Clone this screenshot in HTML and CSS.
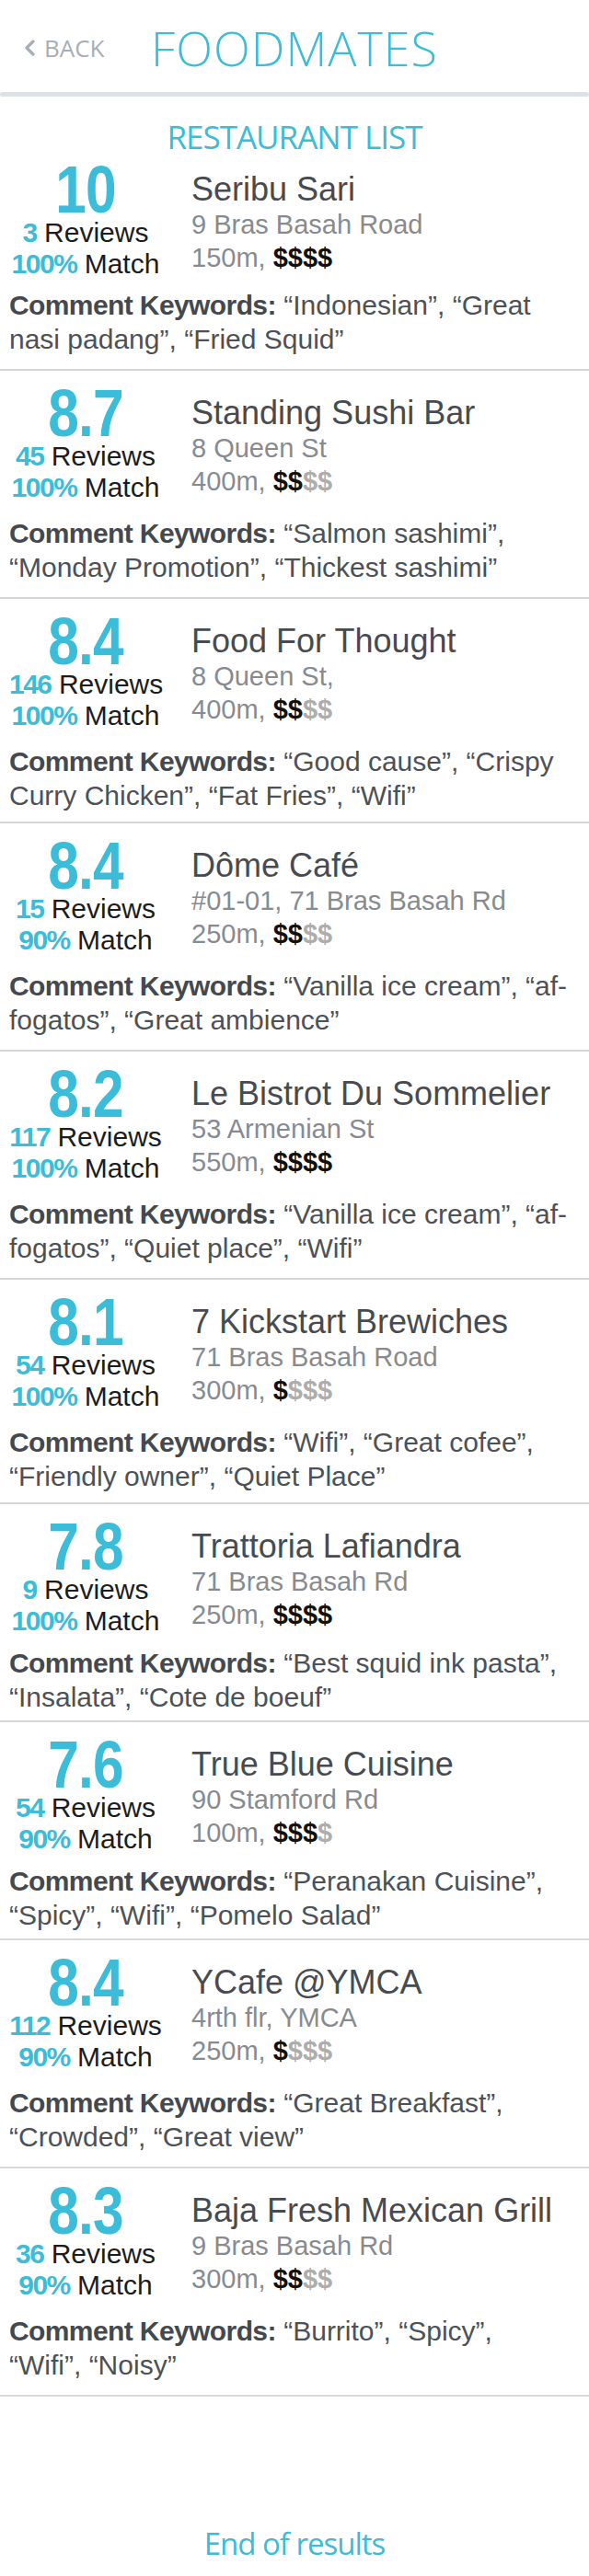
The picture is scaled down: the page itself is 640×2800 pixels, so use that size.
FILE: index.html
```html
<!DOCTYPE html>
<html lang="en">
<head>
<meta charset="utf-8">
<title>Foodmates – Restaurant List</title>
<link rel="stylesheet" href="styles.css">
</head>
<body>
<div class="screen">
  <header class="topbar">
    <a class="back" href="#">
      <svg class="back-icon" viewBox="0 0 14 18" width="14" height="18" aria-hidden="true"><polyline points="11,2 4,9 11,16" fill="none" stroke="currentColor" stroke-width="3.2" stroke-linecap="round" stroke-linejoin="round"/></svg>
      <span>BACK</span>
    </a>
    <h1 class="brand">FOODMATES</h1>
  </header>
  <div class="topbar-shadow"></div>

  <h2 class="list-title">RESTAURANT LIST</h2>

  <ul class="list">
    <li class="item">
      <div class="item-main">
        <div class="score">
          <div class="score-value">10</div>
          <div class="score-meta"><b>3</b> Reviews</div>
          <div class="score-meta"><b>100%</b> Match</div>
        </div>
        <div class="info">
          <div class="name">Seribu Sari</div>
          <div class="addr">9 Bras Basah Road</div>
          <div class="dist">150m, <span class="price">$$$$</span></div>
        </div>
      </div>
      <p class="keywords"><b>Comment Keywords:</b> “Indonesian”, “Great<br>nasi padang”, “Fried Squid”</p>
    </li>

    <li class="item">
      <div class="item-main">
        <div class="score">
          <div class="score-value">8.7</div>
          <div class="score-meta"><b>45</b> Reviews</div>
          <div class="score-meta"><b>100%</b> Match</div>
        </div>
        <div class="info">
          <div class="name">Standing Sushi Bar</div>
          <div class="addr">8 Queen St</div>
          <div class="dist">400m, <span class="price">$$<span class="off">$$</span></span></div>
        </div>
      </div>
      <p class="keywords"><b>Comment Keywords:</b> “Salmon sashimi”,<br>“Monday Promotion”, “Thickest sashimi”</p>
    </li>

    <li class="item item--snug">
      <div class="item-main">
        <div class="score">
          <div class="score-value">8.4</div>
          <div class="score-meta"><b>146</b> Reviews</div>
          <div class="score-meta"><b>100%</b> Match</div>
        </div>
        <div class="info">
          <div class="name">Food For Thought</div>
          <div class="addr">8 Queen St,</div>
          <div class="dist">400m, <span class="price">$$<span class="off">$$</span></span></div>
        </div>
      </div>
      <p class="keywords"><b>Comment Keywords:</b> “Good cause”, “Crispy<br>Curry Chicken”, “Fat Fries”, “Wifi”</p>
    </li>

    <li class="item">
      <div class="item-main">
        <div class="score">
          <div class="score-value">8.4</div>
          <div class="score-meta"><b>15</b> Reviews</div>
          <div class="score-meta"><b>90%</b> Match</div>
        </div>
        <div class="info">
          <div class="name">Dôme Café</div>
          <div class="addr">#01-01, 71 Bras Basah Rd</div>
          <div class="dist">250m, <span class="price">$$<span class="off">$$</span></span></div>
        </div>
      </div>
      <p class="keywords"><b>Comment Keywords:</b> “Vanilla ice cream”, “af-<br>fogatos”, “Great ambience”</p>
    </li>

    <li class="item">
      <div class="item-main">
        <div class="score">
          <div class="score-value">8.2</div>
          <div class="score-meta"><b>117</b> Reviews</div>
          <div class="score-meta"><b>100%</b> Match</div>
        </div>
        <div class="info">
          <div class="name">Le Bistrot Du Sommelier</div>
          <div class="addr">53 Armenian St</div>
          <div class="dist">550m, <span class="price">$$$$</span></div>
        </div>
      </div>
      <p class="keywords"><b>Comment Keywords:</b> “Vanilla ice cream”, “af-<br>fogatos”, “Quiet place”, “Wifi”</p>
    </li>

    <li class="item item--snug">
      <div class="item-main">
        <div class="score">
          <div class="score-value">8.1</div>
          <div class="score-meta"><b>54</b> Reviews</div>
          <div class="score-meta"><b>100%</b> Match</div>
        </div>
        <div class="info">
          <div class="name">7 Kickstart Brewiches</div>
          <div class="addr">71 Bras Basah Road</div>
          <div class="dist">300m, <span class="price">$<span class="off">$$$</span></span></div>
        </div>
      </div>
      <p class="keywords"><b>Comment Keywords:</b> “Wifi”, “Great cofee”,<br>“Friendly owner”, “Quiet Place”</p>
    </li>

    <li class="item item--tight">
      <div class="item-main">
        <div class="score">
          <div class="score-value">7.8</div>
          <div class="score-meta"><b>9</b> Reviews</div>
          <div class="score-meta"><b>100%</b> Match</div>
        </div>
        <div class="info">
          <div class="name">Trattoria Lafiandra</div>
          <div class="addr">71 Bras Basah Rd</div>
          <div class="dist">250m, <span class="price">$$$$</span></div>
        </div>
      </div>
      <p class="keywords"><b>Comment Keywords:</b> “Best squid ink pasta”,<br>“Insalata”, “Cote de boeuf”</p>
    </li>

    <li class="item item--tight">
      <div class="item-main">
        <div class="score">
          <div class="score-value">7.6</div>
          <div class="score-meta"><b>54</b> Reviews</div>
          <div class="score-meta"><b>90%</b> Match</div>
        </div>
        <div class="info">
          <div class="name">True Blue Cuisine</div>
          <div class="addr">90 Stamford Rd</div>
          <div class="dist">100m, <span class="price">$$$<span class="off">$</span></span></div>
        </div>
      </div>
      <p class="keywords"><b>Comment Keywords:</b> “Peranakan Cuisine”,<br>“Spicy”, “Wifi”, “Pomelo Salad”</p>
    </li>

    <li class="item">
      <div class="item-main">
        <div class="score">
          <div class="score-value">8.4</div>
          <div class="score-meta"><b>112</b> Reviews</div>
          <div class="score-meta"><b>90%</b> Match</div>
        </div>
        <div class="info">
          <div class="name">YCafe @YMCA</div>
          <div class="addr">4rth flr, YMCA</div>
          <div class="dist">250m, <span class="price">$<span class="off">$$$</span></span></div>
        </div>
      </div>
      <p class="keywords"><b>Comment Keywords:</b> “Great Breakfast”,<br>“Crowded”, “Great view”</p>
    </li>

    <li class="item">
      <div class="item-main">
        <div class="score">
          <div class="score-value">8.3</div>
          <div class="score-meta"><b>36</b> Reviews</div>
          <div class="score-meta"><b>90%</b> Match</div>
        </div>
        <div class="info">
          <div class="name">Baja Fresh Mexican Grill</div>
          <div class="addr">9 Bras Basah Rd</div>
          <div class="dist">300m, <span class="price">$$<span class="off">$$</span></span></div>
        </div>
      </div>
      <p class="keywords"><b>Comment Keywords:</b> “Burrito”, “Spicy”,<br>“Wifi”, “Noisy”</p>
    </li>
  </ul>

  <p class="end">End of results</p>
</div>
</body>
</html>
```

FILE: styles.css
```css
* { box-sizing: border-box; }

html, body {
  margin: 0;
  padding: 0;
  background: #ffffff;
}

body {
  font-family: "Liberation Sans", Arial, sans-serif;
  color: #474b50;
}

.screen {
  width: 640px;
}

/* ---------- top bar ---------- */
.topbar {
  height: 100px;
  padding-top: 4px;
  display: grid;
  grid-template-columns: 1fr auto 1fr;
  align-items: center;
}

.back {
  justify-self: start;
  margin-left: 25px;
  display: flex;
  align-items: center;
  gap: 9px;
  color: #a7aeb5;
  text-decoration: none;
  font-family: "Open Sans", sans-serif;
  font-size: 26px;
  line-height: 1;
}

.back-icon { display: block; }

.brand {
  margin: 0;
  font-family: "Open Sans", sans-serif;
  font-weight: 300;
  font-size: 52px;
  letter-spacing: 1px;
  color: #3bbcd8;
  line-height: 1.2;
}

.topbar-shadow {
  height: 5px;
  background: #dde2e7;
  border-radius: 3px;
}

.list-title {
  margin: 27px 0 0;
  text-align: center;
  font-family: "Open Sans", sans-serif;
  font-weight: 400;
  font-size: 35px;
  letter-spacing: -1px;
  line-height: 34px;
  color: #3bbcd8;
}

/* ---------- list ---------- */
.list {
  list-style: none;
  margin: 0;
  padding: 0;
}

.item {
  padding: 16px 10px 14px 10px;
  border-bottom: 2px solid #d6d6d6;
}

.item:first-child { padding-top: 10px; }
.item:first-child .keywords { margin-top: 9px; }
.item--snug { padding-bottom: 10px; }
.item--tight { padding-bottom: 7px; }
.item--tight .keywords { margin-top: 10px; }

.item-main {
  display: flex;
  gap: 32px;
}

.score {
  flex: none;
  width: 166px;
  text-align: center;
}

/* condensed bold numerals */
.score-value {
  font-weight: 700;
  font-size: 72px;
  line-height: 60px;
  letter-spacing: -1px;
  color: #3bbcd8;
  transform: scaleX(0.84);
}

.score-meta {
  font-size: 30px;
  line-height: 34px;
  color: #1c1c1c;
  white-space: nowrap;
}

.score-meta b {
  font-weight: 700;
  letter-spacing: -1.5px;
  line-height: 1;
  color: #3bbcd8;
}

.info {
  margin-top: 10px;
  min-width: 0;
}

.name {
  font-size: 36px;
  line-height: 40px;
  color: #474b50;
  white-space: nowrap;
}

.addr,
.dist {
  font-size: 29px;
  line-height: 36px;
  color: #878b90;
  white-space: nowrap;
}

.price {
  font-weight: 700;
  line-height: 1;
  color: #111111;
}

.price .off { color: #adadad; }

.keywords {
  margin: 14px 0 0;
  font-size: 30px;
  line-height: 37px;
  color: #4d5156;
  white-space: nowrap;
}

.keywords b {
  font-weight: 700;
  font-size: 30px;
  line-height: 1;
  letter-spacing: -0.6px;
  color: #45494e;
}

/* ---------- footer ---------- */
.end {
  margin: 140px 0 0;
  text-align: center;
  font-family: "Open Sans", sans-serif;
  font-size: 33px;
  letter-spacing: -1px;
  line-height: 40px;
  color: #3bbcd8;
}
```
